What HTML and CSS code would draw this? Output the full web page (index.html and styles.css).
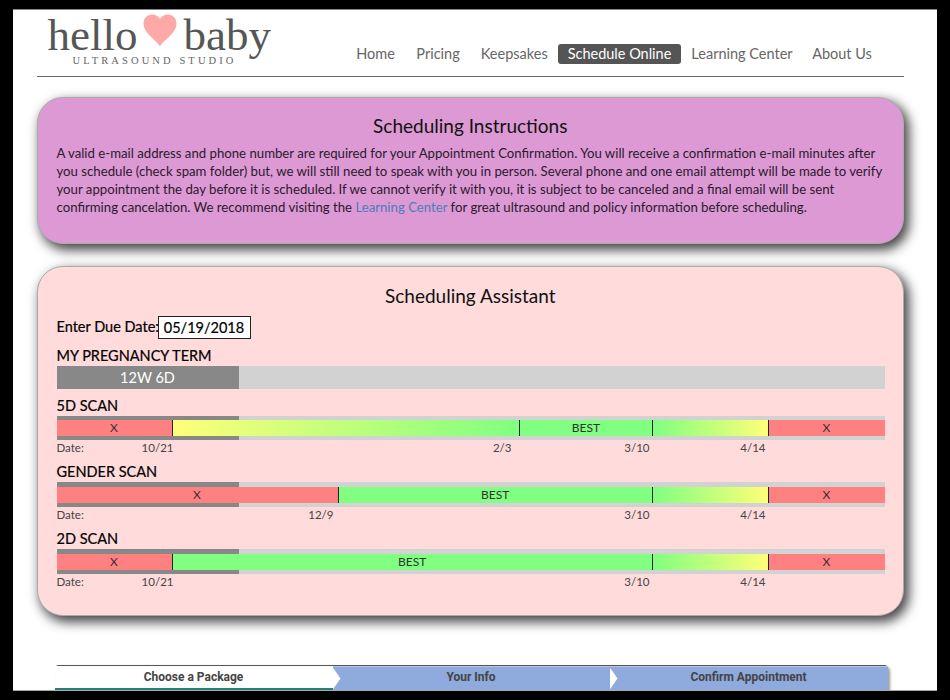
FILE: index.html
```html
<!DOCTYPE html>
<html lang="en">
<head>
<meta charset="utf-8">
<title>Hello Baby Ultrasound Studio</title>
<link rel="stylesheet" href="styles.css">
</head>
<body>
<div class="page">
  <header class="header">
    <div class="logo">
      <div class="logo-name">
        <span class="hello">hello</span>
        <svg class="heart" viewBox="0 0 34 33"><path d="M17 32.5C14.500 27 0.500 19.500 0.500 9.500C0.500 4 4.500 0.500 9 0.500C12.500 0.500 15.500 2 17 5C18.500 2 21.500 0.500 25 0.500C29.500 0.500 33.500 4 33.500 9.500C33.500 19.500 19.500 27 17 32.500Z"/></svg>
        <span class="baby">baby</span>
      </div>
      <div class="logo-sub">ULTRASOUND STUDIO</div>
    </div>
    <nav class="nav">
      <a>Home</a><a>Pricing</a><a>Keepsakes</a><a class="active">Schedule Online</a><a>Learning Center</a><a>About Us</a>
    </nav>
  </header>

  <section class="card instructions">
    <h2>Scheduling Instructions</h2>
    <p>
      <span class="line l1">A valid e-mail address and phone number are required for your Appointment Confirmation. You will receive a confirmation e-mail minutes after</span>
      <span class="line l2">you schedule (check spam folder) but, we will still need to speak with you in person. Several phone and one email attempt will be made to verify</span>
      <span class="line l3">your appointment the day before it is scheduled. If we cannot verify it with you, it is subject to be canceled and a final email will be sent</span>
      <span class="line l4">confirming cancelation. We recommend visiting the <a>Learning Center</a> for great ultrasound and policy information before scheduling.</span>
    </p>
  </section>

  <section class="card assistant">
    <h2>Scheduling Assistant</h2>
    <div class="due"><label>Enter Due Date:</label><div class="field"><span>05/19/2018</span></div></div>
    <h3 class="term-title"><span class="t-term">MY PREGNANCY TERM</span></h3>
    <div class="term"><div>12W 6D</div></div>

    <div class="scan five">
      <h3><span>5D SCAN</span></h3>
      <div class="track"><div class="bar"><i class="bad">X</i><i class="rise"></i><i class="best">BEST</i><i class="fall"></i><i class="bad">X</i></div></div>
      <div class="dates"><span class="label">Date:</span><span>10/21</span><span>2/3</span><span>3/10</span><span>4/14</span></div>
    </div>
    <div class="scan gender">
      <h3><span>GENDER SCAN</span></h3>
      <div class="track"><div class="bar"><i class="bad">X</i><i class="best">BEST</i><i class="fall"></i><i class="bad">X</i></div></div>
      <div class="dates"><span class="label">Date:</span><span>12/9</span><span>3/10</span><span>4/14</span></div>
    </div>
    <div class="scan two">
      <h3><span>2D SCAN</span></h3>
      <div class="track"><div class="bar"><i class="bad">X</i><i class="best">BEST</i><i class="fall"></i><i class="bad">X</i></div></div>
      <div class="dates"><span class="label">Date:</span><span>10/21</span><span>3/10</span><span>4/14</span></div>
    </div>
  </section>

  <div class="steps">
    <div class="step current">Choose a Package</div>
    <div class="step">Your Info</div>
    <div class="step">Confirm Appointment</div>
  </div>
</div>
</body>
</html>
```
FILE: styles.css
```css
* { box-sizing: border-box; }
body {
  margin: 0;
  height: 700px;
  overflow: hidden;
  background: #000;
  padding: 9px 13px 9px 12.5px;
  font-family: Lato, "Liberation Sans", sans-serif;
  color: #222;
}
.page {
  height: 682px;
  background: #fff;
  border-top: 1px solid #888;
  border-bottom: 1px solid #aaa;
  padding: 0 33px 0 24px;
  overflow: hidden;
}

.header {
  height: 67px;
  border-bottom: 1px solid #666;
  display: flex;
}
.logo { width: 309px; padding-left: 11px; flex: none; }
.logo-name {
  display: flex;
  height: 45px;
  font: 45px/50px "Liberation Serif", serif;
  color: #555756;
}
.hello { width: 95px; }
.heart { width: 34px; height: 33px; margin: 4px 7px 0 0; fill: #ffa8a8; }
.logo-sub {
  font: 10.5px/12px "Liberation Serif", serif;
  letter-spacing: 3.1px;
  color: #666;
  padding-left: 25px;
  white-space: nowrap;
}
.nav {
  display: grid;
  grid-template-columns: 60px 65px 87.5px 123px 122px 78px;
  height: 20px;
  margin-top: 34px;
  font-size: 14.5px;
  line-height: 20px;
  text-align: center;
  white-space: nowrap;
  color: #666;
}
.nav .active { background: #555; color: #fff; border-radius: 3px; }

.card {
  border: 1px solid #aaa;
  border-radius: 26px;
  box-shadow: 4px 5px 12px 1px #444;
  padding: 0 19px;
}
h2 {
  margin: 0;
  font-size: 19px;
  line-height: 24px;
  font-weight: 400;
  text-align: center;
  color: #111;
}
.instructions { background: #dd99d3; height: 147px; margin-top: 20px; padding-top: 16px; }
.instructions p { margin: 7px 0 0; font-size: 13.2px; line-height: 17.9px; color: #2a1a30; }
.line { display: block; white-space: nowrap; text-align-last: justify; }
.l1, .l2 { width: 812px; }
.l3 { width: 765px; }
.l4 { width: 741px; }
.line a { color: #4a7ebb; }

.assistant { background: #ffdbdb; height: 350px; margin-top: 22px; padding-top: 17px; }
.due { display: flex; margin-top: 8px; font-size: 14.5px; line-height: 22px; color: #000; -webkit-text-stroke: .2px #000; }
.due label { width: 101px; white-space: nowrap; }
.field {
  width: 93px;
  height: 23px;
  border: 1px solid #222;
  background: #fff;
  text-align: center;
}
h3 {
  margin: 0;
  font-size: 14.5px;
  line-height: 20px;
  font-weight: 400;
  color: #000;
  -webkit-text-stroke: .2px #000;
}
.term-title { margin-top: 7px; }
.term { background: #d2d2d2; height: 23px; width: 828px; }
.term div {
  background: #888;
  width: 182px;
  height: 23px;
  color: #fff;
  text-align: center;
  font-size: 14.5px;
  line-height: 24px;
}
.scan { width: 828px; height: 67px; }
.five { margin-top: 7px; height: 66px; }
.track {
  height: 25px;
  padding: 5px 0 4px;
  background: linear-gradient(90deg, #888 182px, #d2d2d2 182px);
}
.five .track { height: 24px; padding-top: 4px; }
.bar { display: grid; height: 16px; }
.five .bar { grid-template-columns: 116px 347.500px 133px 115.500px 116px; }
.gender .bar { grid-template-columns: 282px 314.500px 115.500px 116px; }
.two .bar { grid-template-columns: 116px 480.500px 115.500px 116px; }
.bar i {
  font-style: normal;
  font-size: 12px;
  line-height: 16px;
  text-align: center;
  color: #333;
  border-right: 1px solid #222;
}
.bar i:last-child { border: 0; }
.bad { background: #ff8080; }
.best { background: #80ff80; }
.rise { background: linear-gradient(90deg, #ffff78, #80ff80); }
.fall { background: linear-gradient(90deg, #80ff80, #ffff78); }
.dates { display: grid; font-size: 11.5px; line-height: 15px; color: #444; }
.dates span { text-align: right; }
.dates .label { text-align: left; }
.five .dates { grid-template-columns: 60px 57px 338px 138px 116px; }
.gender .dates { grid-template-columns: 60px 217px 316px 116px; }
.two .dates { grid-template-columns: 60px 57px 476px 116px; }

.steps {
  display: grid;
  grid-template-columns: 278px 277px 278px;
  width: 833px;
  height: 30px;
  margin: 49px 0 0 18px;
  border-top: 1px solid #555;
  border-right: 1px solid #555;
  border-radius: 4px;
  box-shadow: 2px 2px 3px #999;
  background: #fff;
}
.step {
  position: relative;
  background: #8faadc;
  border-top: 1px solid #b8c4dc;
  font: bold 12px/20px Roboto, "Liberation Sans", sans-serif;
  color: #444;
  text-align: center;
}
.step.current { background: #fff; border-color: #fff; height: 24px; border-bottom: 2px solid #268078; }
.step:not(.current)::before {
  content: "";
  position: absolute;
  left: 0;
  top: 0;
  width: 8px;
  height: 23px;
  background: #fff;
  clip-path: polygon(0 0, 100% 50%, 0 100%);
}
```
